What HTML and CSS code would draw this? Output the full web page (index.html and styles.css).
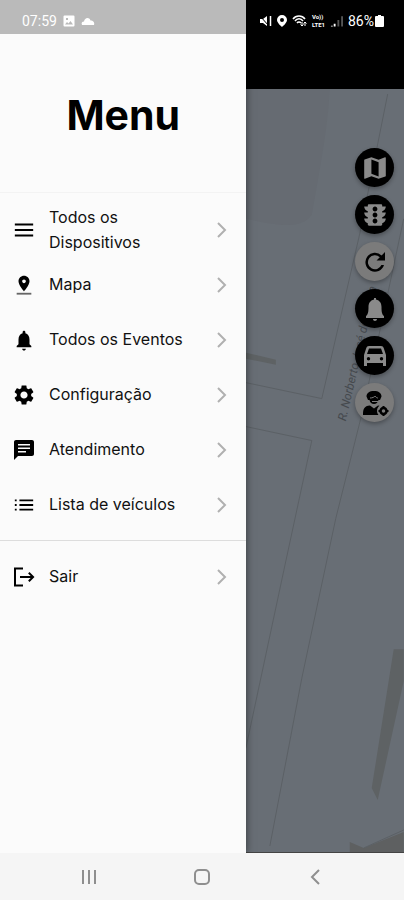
FILE: index.html
```html
<!DOCTYPE html>
<html lang="pt-BR">
<head>
    <meta charset="UTF-8">
    <meta name="viewport" content="width=device-width, initial-scale=1.0">
    <title>Menu</title>
    <link rel="stylesheet" href="styles.css">
</head>
<body>

    <div class="screen">
        <div class="content">
            <aside class="drawer">
                <div class="status status-left">
                    <span>07:59</span>
                    <svg width="12" height="12" viewBox="0 0 12 12"><path fill="currentColor" fill-rule="evenodd" d="M1.500 .5h9a1 1 0 0 1 1 1v9a1 1 0 0 1-1 1h-9a1 1 0 0 1-1-1v-9a1 1 0 0 1 1-1zM2 9.500h8L7.500 6 5.500 8.500 4 7zM3 3v2h2V3z"/></svg>
                    <svg width="14" height="10" viewBox="0 0 14 10"><path fill="currentColor" d="M1 9C0 7 1 5.500 3 5.500 3.500 2 8 .5 9.500 4.500 12 4.500 14 6.500 13 9z"/></svg>
                </div>

                <h1>Menu</h1>

                <nav>
                    <ul class="menu-list">
                        <li><a class="menu-item" href="#dispositivos">
                            <svg class="icon" viewBox="0 0 24 24"><path d="M2 5h20v2H2zm0 6h20v2H2zm0 6h20v2H2z"/></svg>
                            <span>Todos os Dispositivos</span>
                            <svg class="chevron" viewBox="0 0 10 16"><path d="M1 1l7 7-7 7"/></svg>
                        </a></li>
                        <li><a class="menu-item" href="#mapa">
                            <svg class="icon" viewBox="0 0 24 24"><path d="M18 8c0-3.310-2.690-6-6-6S6 4.690 6 8c0 4.500 6 11 6 11s6-6.500 6-11zm-8 0c0-1.100.9-2 2-2s2 .9 2 2-.89 2-2 2c-1.100 0-2-.9-2-2z"/><path fill="#666" d="M4 20.500v2h16v-2z"/></svg>
                            <span>Mapa</span>
                            <svg class="chevron" viewBox="0 0 10 16"><path d="M1 1l7 7-7 7"/></svg>
                        </a></li>
                        <li><a class="menu-item" href="#eventos">
                            <svg class="icon" viewBox="0 0 24 24"><path d="M12 23.500c1.100 0 2-.9 2-2h-4c0 1.100.9 2 2 2zm6-7v-5c0-3.570-1.640-6.140-4.500-6.820V3.500c0-.83-.67-1.500-1.500-1.500s-1.500.670-1.500 1.500v1.180C7.630 5.360 6 7.920 6 11.500v5l-2 2V20h16v-1.500l-2-2z"/></svg>
                            <span>Todos os Eventos</span>
                            <svg class="chevron" viewBox="0 0 10 16"><path d="M1 1l7 7-7 7"/></svg>
                        </a></li>
                        <li><a class="menu-item" href="#configuracao">
                            <svg class="icon" viewBox="1 1 22 22"><path d="M19.140 12.940c.04-.3.060-.61.060-.94 0-.32-.02-.64-.07-.94l2.030-1.580c.18-.14.230-.41.120-.61l-1.920-3.320c-.12-.22-.37-.29-.59-.22l-2.390.96c-.5-.38-1.030-.7-1.620-.94l-.36-2.540c-.04-.24-.24-.41-.48-.41h-3.840c-.24 0-.43.170-.47.410l-.36 2.540c-.59.240-1.130.570-1.620.940l-2.390-.96c-.22-.08-.47 0-.59.220L2.740 8.870c-.12.210-.08.470.120.610l2.030 1.580c-.05.300-.09.630-.09.940s.02.640.070.940l-2.030 1.580c-.18.140-.23.410-.12.610l1.920 3.320c.12.220.370.290.590.220l2.390-.96c.5.380 1.030.7 1.620.940l.36 2.540c.05.240.24.410.48.410h3.840c.24 0 .44-.17.470-.41l.36-2.540c.59-.24 1.130-.56 1.620-.94l2.390.96c.22.080.47 0 .59-.22l1.920-3.320c.12-.22.070-.47-.12-.61l-2.010-1.580zM12 15.600c-1.980 0-3.600-1.620-3.600-3.600s1.620-3.600 3.600-3.600 3.600 1.620 3.600 3.600-1.620 3.600-3.600 3.600z"/></svg>
                            <span>Configuração</span>
                            <svg class="chevron" viewBox="0 0 10 16"><path d="M1 1l7 7-7 7"/></svg>
                        </a></li>
                        <li><a class="menu-item" href="#atendimento">
                            <svg class="icon" viewBox="1 1 22 22"><path d="M20 2H4c-1.100 0-2 .9-2 2v18l4-4h14c1.100 0 2-.9 2-2V4c0-1.100-.9-2-2-2zM6 6h12v1.500H6zm0 3.500h12V11H6zM14 14.500H6V13h8z"/></svg>
                            <span>Atendimento</span>
                            <svg class="chevron" viewBox="0 0 10 16"><path d="M1 1l7 7-7 7"/></svg>
                        </a></li>
                        <li><a class="menu-item" href="#veiculos">
                            <svg class="icon" viewBox="0 0 24 24"><path d="M2 11h2v2H2zm0 5h2v2H2zM2 6h2v2H2zm5 5h15v2H7zm0 5h15v2H7zM7 6h15v2H7z"/></svg>
                            <span>Lista de veículos</span>
                            <svg class="chevron" viewBox="0 0 10 16"><path d="M1 1l7 7-7 7"/></svg>
                        </a></li>
                    </ul>
                    <ul class="menu-list">
                        <li><a class="menu-item" href="#sair">
                            <svg class="icon" viewBox="1 1 22 22"><path d="M11 2.500v2H4v15h7v2H2v-19zM17.500 7l5 5-5 5-1.400-1.400 2.600-2.600H8v-2h10.700l-2.600-2.600z"/></svg>
                            <span>Sair</span>
                            <svg class="chevron" viewBox="0 0 10 16"><path d="M1 1l7 7-7 7"/></svg>
                        </a></li>
                    </ul>
                </nav>
            </aside>

            <main class="page">
                <header class="topbar">
                    <div class="status status-right">
                        <svg width="13" height="12" viewBox="0 0 13 12"><path fill="currentColor" d="M1 4h3l4-3v10L4 8H1z"/><path stroke="currentColor" stroke-width="1.500" d="M11.500 1v10"/><path stroke="#000" d="M1 1l9 10"/></svg>
                        <svg width="10" height="12" viewBox="0 0 10 12"><path fill="currentColor" fill-rule="evenodd" d="M5 0a5 5 0 0 1 5 5c0 3-5 7-5 7S0 8 0 5a5 5 0 0 1 5-5zm0 3a2 2 0 1 0 0 4 2 2 0 0 0 0-4z"/></svg>
                        <svg width="15" height="12" viewBox="0 0 15 12" fill="none" stroke="currentColor" stroke-width="1.500"><path d="M1 4c3-4 9-4 12 0M3 6c2-3 6-3 8 0M5 8c1-1.500 3-1.500 4 0"/><path stroke-width="1" d="M10 11V7m-1.500 2.500L10 11l1.500-1.500M13 7v4m-1.500-2.500L13 7l1.500 1.500"/></svg>
                        <span class="volte"><span>Vo))</span><span>LTE1</span></span>
                        <svg width="13" height="12" viewBox="0 0 14 12"><path fill="currentColor" d="M1 12v-1h2v1zM4 12V9h2v3z"/><path fill="#555" d="M8 12V5h2v7zM12 12V1h2v11z"/></svg>
                        <span class="percent">86%</span>
                        <svg width="9" height="12" viewBox="0 0 9 12"><path fill="currentColor" d="M3 0h3v1h2a1 1 0 0 1 1 1v9a1 1 0 0 1-1 1H1a1 1 0 0 1-1-1V2a1 1 0 0 1 1-1h2z"/></svg>
                    </div>
                </header>

                <div class="map">
                    <svg class="map-art" viewBox="0 0 158 764" preserveAspectRatio="xMidYMin slice">
                        <path fill="#666b72" d="M0 0h84c-2 40-10 80-18 126-10 14-30 12-66 4z"/>
                        <path fill="#5e6264" d="M0 264l30 7v5L0 270zM148 561h10v32l-26 119-6-12z"/>
                        <path fill="#5e6061" d="M104 754l14 6 40-16v20h-54z"/>
                        <g fill="none" stroke="#5b6065">
                            <path d="M142 5l-10 50-18 90-38 165-76-16"/>
                            <path d="M0 338l66 14-28 130L0 660"/>
                            <path d="M158 130l-40 188-28 112-34 160-32 168"/>
                            <path d="M118 760l40-18"/>
                        </g>
                        <text class="street" transform="translate(100 333) rotate(-77)">R. Norberto José de Souza</text>
                    </svg>

                    <div class="tools">
                        <button class="tool dark" aria-label="Mapa">
                            <svg viewBox="2 2 20 20"><path d="M20.500 3l-.16.030L15 5.100 9 3 3.360 4.900c-.21.070-.36.250-.36.480V20.500c0 .28.220.5.500.5l.16-.03L9 18.900l6 2.100 5.640-1.900c.21-.07.360-.25.360-.48V3.500c0-.28-.22-.5-.5-.5zM15 19l-6-2.110V5l6 2.110V19z"/></svg>
                        </button>
                        <button class="tool dark" aria-label="Trânsito">
                            <svg viewBox="2 2 20 20"><path d="M21 10h-3V8.860c1.720-.45 3-2 3-3.860h-3V4c0-.55-.45-1-1-1H7c-.55 0-1 .45-1 1v1H3c0 1.860 1.280 3.410 3 3.860V10H3c0 1.860 1.280 3.410 3 3.860V15H3c0 1.860 1.280 3.410 3 3.860V20c0 .55.450 1 1 1h10c.55 0 1-.45 1-1v-1.140c1.720-.45 3-2 3-3.860h-3v-1.140c1.720-.45 3-2 3-3.860zm-9 9c-1.110 0-2-.9-2-2s.89-2 2-2 2 .9 2 2-.89 2-2 2zm0-5c-1.110 0-2-.9-2-2s.89-2 2-2 2 .9 2 2-.89 2-2 2zm0-5c-1.110 0-2-.9-2-2s.89-2 2-2 2 .9 2 2-.89 2-2 2z"/></svg>
                        </button>
                        <button class="tool" aria-label="Atualizar">
                            <svg viewBox="0 0 24 24"><path d="M18.600 5.400A9.500 9.500 0 1 0 21 15h-2.600a7 7 0 1 1-1.600-7.800L13.500 10.500H22V2z"/></svg>
                        </button>
                        <button class="tool dark" aria-label="Eventos">
                            <svg viewBox="0 0 24 24"><path d="M12 24c1.100 0 2-.9 2-2h-4c0 1.100.9 2 2 2zM13 2.500V1h-2v1.500C7 3.500 5.500 6.500 5.500 10c0 5-.5 7.500-2.500 9v2h18v-2c-2-1.500-2.500-4-2.500-9 0-3.500-1.500-6.500-5.500-7.500z"/></svg>
                        </button>
                        <button class="tool dark" aria-label="Veículos">
                            <svg viewBox="0 0 24 24"><path fill-rule="evenodd" d="M6 2h12c1.500 0 2.300.7 2.700 2L23 11v11h-3v-3H4v3H1V11L3.300 4C3.700 2.700 4.500 2 6 2zM6 4.500L4 10h16l-2-5.500zM5.500 13a1.700 1.700 0 1 0 0 3.400 1.700 1.700 0 0 0 0-3.400zm13 0a1.700 1.700 0 1 0 0 3.400 1.700 1.700 0 0 0 0-3.400z"/></svg>
                        </button>
                        <button class="tool" aria-label="Suporte">
                            <svg viewBox="0 0 24 24"><path d="M11 0c4.500 0 7.500 2 7.500 5.500L17 9h-1.500c-.7 2.500-2.200 4-4.500 4s-4-1.500-4.500-4H5L3.500 5.500C3.500 2 6.500 0 11 0zM0 24c0-6 1-9 7-9.500l4 3 4-3 1.500.3c-2.500 1.700-3.500 6.200-1 9.200z"/><path fill="none" stroke="#7b7b7b" d="M7 7c2.500 0 4.500-1 5-2 1 1.500 2 2 3 2M9 10.500h6"/><circle cx="20.500" cy="20" r="3" fill="none" stroke="#000" stroke-width="2.500"/><path d="M19.500 15h2v2h-2zm0 8h2v2h-2zm-4-4h2v2h-2zm8 0h2v2h-2z"/></svg>
                        </button>
                    </div>
                </div>
            </main>
        </div>

        <footer class="navbar">
            <button aria-label="Recentes"><svg width="18" height="18" viewBox="0 0 18 18"><path d="M3 2v14M9 2v14M15 2v14"/></svg></button>
            <button aria-label="Início"><svg width="18" height="18" viewBox="0 0 18 18"><rect x="2" y="2" width="14" height="14" rx="4"/></svg></button>
            <button aria-label="Voltar"><svg width="18" height="18" viewBox="0 0 18 18"><path d="M13 2L6 9l7 7"/></svg></button>
        </footer>
    </div>

</body>
</html>
```
FILE: styles.css
```css
* {
    box-sizing: border-box;
}

body {
    margin: 0;
    font-family: Inter, "Open Sans", sans-serif;
    color: #111111;
}

button {
    border: none;
    padding: 0;
    cursor: pointer;
}

.screen {
    display: flex;
    flex-direction: column;
    min-height: 100vh;
}

.content {
    flex: 1;
    display: flex;
}

.drawer {
    flex: 0 0 61%;
    background-color: #fbfbfb;
    box-shadow: 0 0 8px rgba(0, 0, 0, 0.5);
    z-index: 1;
}

.status {
    display: flex;
    align-items: center;
    height: 34px;
    padding-top: 8px;
    font-family: Roboto, sans-serif;
    font-size: 14px;
    color: #ffffff;
}

.status-left {
    gap: 6px;
    padding-left: 22px;
    background-color: #bababa;
}

.status-right {
    justify-content: flex-end;
    gap: 5px;
    padding-right: 20px;
}

.volte {
    display: flex;
    flex-direction: column;
    font-size: 6px;
    font-weight: bold;
    line-height: 8px;
}

.percent {
    margin-right: -4px;
}

h1 {
    margin: 0;
    padding: 57px 0 53px;
    border-bottom: 1px solid #f3f3f3;
    font-size: 41px;
    line-height: 48px;
    text-align: center;
    color: #000000;
}

.menu-list {
    list-style: none;
    margin: 0;
    padding: 9px 0 8px;
}

.menu-list + .menu-list {
    padding-top: 8px;
    border-top: 1px solid #dddddd;
}

.menu-item {
    display: flex;
    align-items: center;
    gap: 14px;
    min-height: 55px;
    padding: 0 19px 0 13px;
    font-size: 16px;
    line-height: 25px;
    color: inherit;
    text-decoration: none;
}

.menu-item span {
    flex: 1;
}

.icon {
    width: 22px;
    height: 22px;
    fill: #000000;
}

.chevron {
    width: 10px;
    height: 16px;
    fill: none;
    stroke: #b0b0b0;
    stroke-width: 2;
}

.page {
    flex: 1;
    display: flex;
    flex-direction: column;
    min-width: 0;
}

.topbar {
    height: 89px;
    background-color: #000000;
}

.map {
    flex: 1;
    position: relative;
    overflow: hidden;
    background-color: #686e75;
    border-bottom: 1px solid #444444;
}

.map-art {
    position: absolute;
    width: 100%;
    height: 100%;
}

.street {
    font-family: Roboto, sans-serif;
    font-size: 12px;
    font-style: italic;
    fill: #45494e;
}

.tools {
    position: absolute;
    top: 59px;
    right: 10px;
    display: flex;
    flex-direction: column;
    gap: 8px;
}

.tool {
    display: flex;
    align-items: center;
    justify-content: center;
    width: 39px;
    height: 39px;
    border-radius: 50%;
    background-color: #7b7b7b;
    box-shadow: 0 2px 4px rgba(0, 0, 0, 0.3);
}

.tool svg {
    width: 24px;
    height: 24px;
    overflow: visible;
    fill: #000000;
}

.tool.dark {
    background-color: #000000;
}

.tool.dark svg {
    fill: #8a8a8a;
}

.navbar {
    display: flex;
    justify-content: space-around;
    height: 47px;
    padding: 0 32px;
    background-color: #f5f5f5;
    z-index: 2;
}

.navbar button {
    background: none;
}

.navbar svg {
    display: block;
    fill: none;
    stroke: #8f8f8f;
    stroke-width: 2;
}
```
